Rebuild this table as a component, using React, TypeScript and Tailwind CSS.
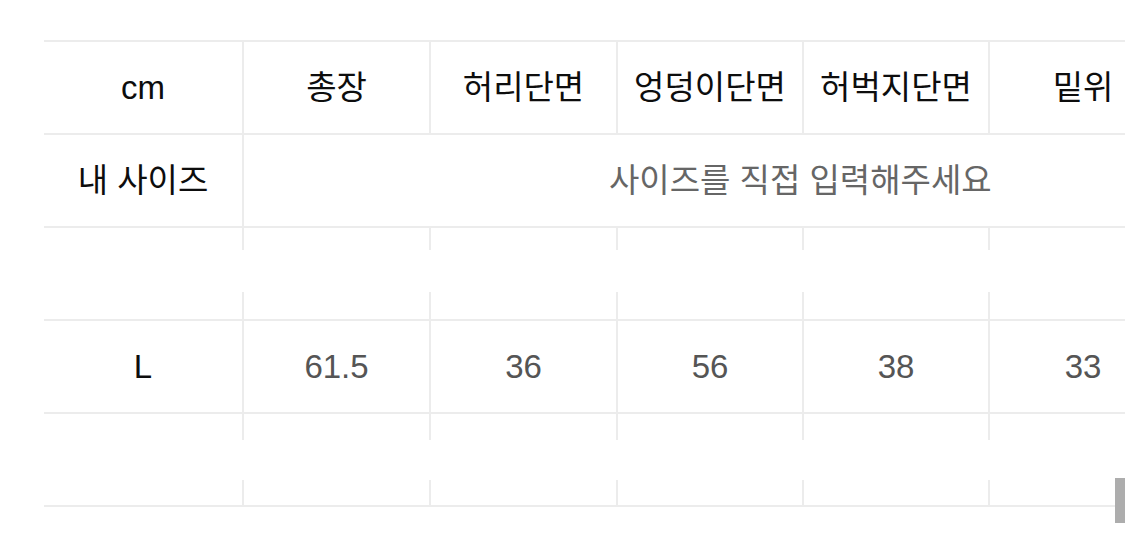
import * as React from "react"

const headers = ["cm", "총장", "허리단면", "엉덩이단면", "허벅지단면", "밑위"]
const sizeL = ["L", "61.5", "36", "56", "38", "33"]

const font = { fontFamily: '"Liberation Sans", "Noto Sans CJK KR", sans-serif' }
const cols = "grid-cols-[198px_187px_187px_186px_186px_188px]"

function Cell({
  children,
  first,
  className = "",
}: {
  children?: React.ReactNode
  first?: boolean
  className?: string
}) {
  return (
    <div
      className={
        "flex h-[93px] items-center justify-center border-t-2 border-[#ececec] " +
        (first ? "" : "border-l-2 ") +
        className
      }
    >
      {children}
    </div>
  )
}

function HiddenRow({ band }: { band: string }) {
  return (
    <div className={"relative col-span-6 grid " + cols}>
      {headers.map((h, i) => (
        <Cell key={h} first={i === 0} />
      ))}
      {/* blanked-out band over the middle of the row */}
      <div className={"absolute left-0 right-0 bg-white " + band} />
    </div>
  )
}

export default function App() {
  return (
    <div className="relative h-[549px] w-[1125px] overflow-hidden bg-white" style={font}>
      <div className="pl-[44px] pt-[40px]">
        <div className={"grid w-max border-b-2 border-[#ececec] text-[33px] leading-none " + cols}>
          {headers.map((h, i) => (
            <Cell key={h} first={i === 0} className="text-[#0d0d0d]">
              {h}
            </Cell>
          ))}

          <Cell first className="text-[#0d0d0d]">
            내 사이즈
          </Cell>
          <div className="col-span-5 flex h-[93px] items-center border-t-2 border-l-2 border-[#ececec] pl-[365px] text-[#666]">
            <span className="whitespace-nowrap">사이즈를 직접 입력해주세요</span>
          </div>

          <HiddenRow band="top-[24px] h-[42px]" />

          {sizeL.map((v, i) => (
            <Cell key={i} first={i === 0} className={i === 0 ? "text-[#0d0d0d]" : "text-[#555]"}>
              {v}
            </Cell>
          ))}

          <HiddenRow band="top-[28px] h-[40px]" />
        </div>
      </div>

      {/* scrollbar thumb */}
      <div className="absolute right-0 top-[478px] h-[45px] w-[10px] bg-[#adadad]" />
    </div>
  )
}
